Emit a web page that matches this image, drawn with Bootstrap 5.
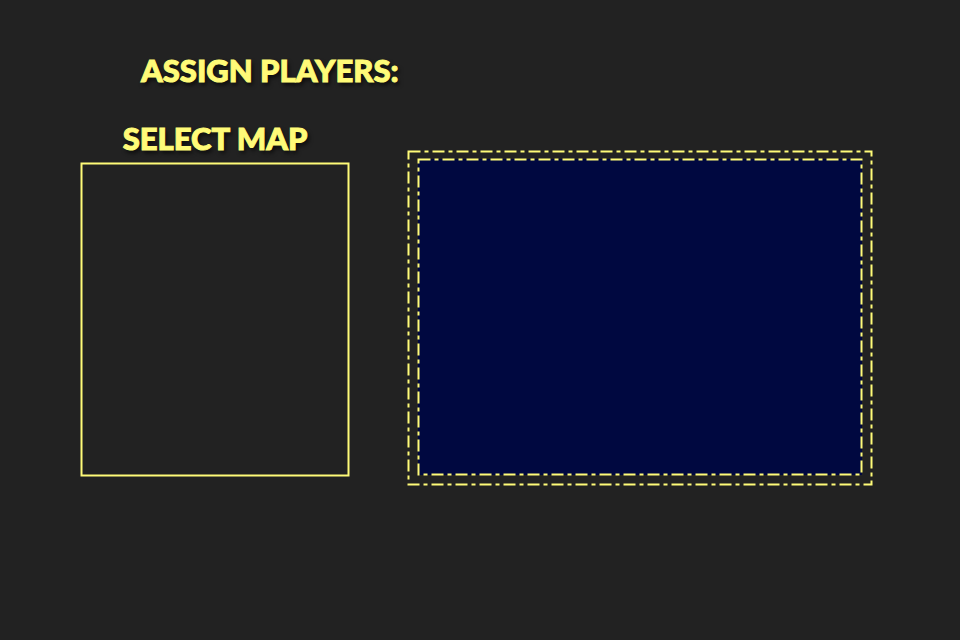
<!DOCTYPE html>
<html lang="en">
<head>
<meta charset="utf-8">
<meta name="viewport" content="width=device-width, initial-scale=1">
<title>Game setup</title>
<link href="https://cdn.jsdelivr.net/npm/bootstrap@5.3.0/dist/css/bootstrap.min.css" rel="stylesheet">
<style>
  :root { --lemon: #fffb78; --night: #000840; }
  body { background: #222; color: var(--lemon); }
  .setup { padding: 50px 87px 0 80px; }
  .title-text {
    font: 900 31px/40px Lato, "Liberation Sans", sans-serif;
    -webkit-text-stroke: 1px var(--lemon);
    text-shadow: 2px 3px 4px rgba(0, 0, 0, .7);
    white-space: nowrap;
  }
  .assign { padding-left: 61px; }
  .boards { gap: 57px; padding-top: 28px; }
  .map-col { flex: 0 1 270px; }
  .map-list { height: 315px; margin-top: 4px; }
  .preview-col { flex: 1 1 0; margin-top: 32px; }
  .preview { height: 336px; padding: 9px 11px 11px; }
  .screen { background: var(--night); }
  .frame, .screen { overflow: visible; }
  .outline { fill: none; stroke: var(--lemon); stroke-width: 2; x: 1.5px; y: 1.5px; width: calc(100% - 3px); height: calc(100% - 3px); }
  .dashed { stroke-dasharray: 12 4 4 4; }
  .inner-outline { x: 0.5px; y: 0.5px; width: calc(100% - 1px); height: calc(100% - 1px); }
</style>
</head>
<body>
<main class="setup">
  <h1 class="title-text assign m-0 text-uppercase">Assign players:</h1>
  <div class="boards d-flex align-items-start">
    <section class="map-col" aria-labelledby="map-title">
      <h2 class="title-text m-0 text-center text-uppercase" id="map-title">Select map</h2>
      <div class="map-list">
        <svg class="frame d-block w-100 h-100" aria-hidden="true"><rect class="outline"/></svg>
      </div>
    </section>
    <section class="preview-col" aria-label="Map preview">
      <div class="preview position-relative">
        <svg class="frame position-absolute top-0 start-0 w-100 h-100" aria-hidden="true"><rect class="outline dashed"/></svg>
        <svg class="screen d-block w-100 h-100" aria-hidden="true"><rect class="outline dashed inner-outline"/></svg>
      </div>
    </section>
  </div>
</main>
<script src="https://cdn.jsdelivr.net/npm/bootstrap@5.3.0/dist/js/bootstrap.bundle.min.js"></script>
</body>
</html>
